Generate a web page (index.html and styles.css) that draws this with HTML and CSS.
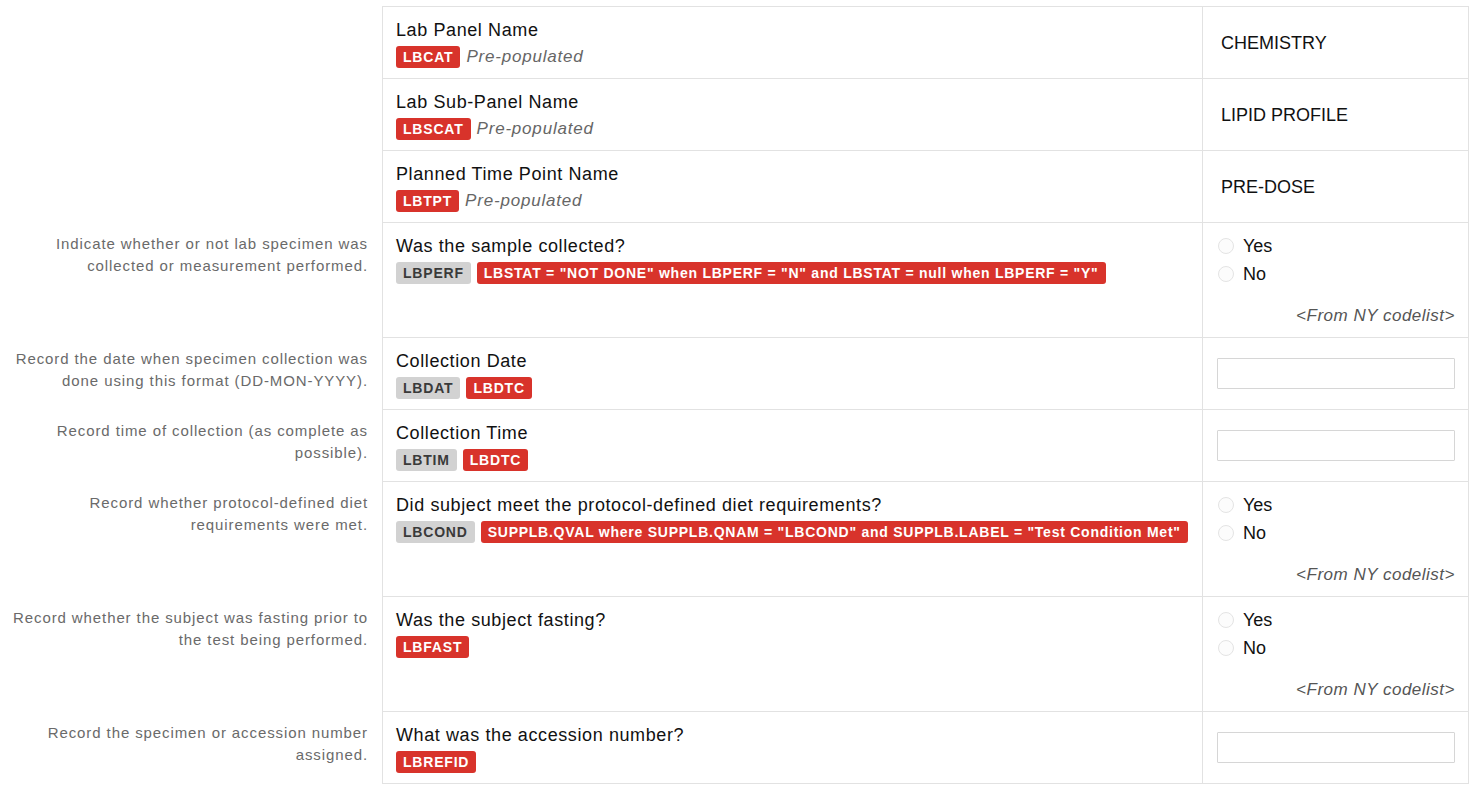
FILE: index.html
```html
<!DOCTYPE html>
<html lang="en">
<head>
  <meta charset="UTF-8">
  <meta name="viewport" content="width=device-width, initial-scale=1.0">
  <title>Laboratory Test Results</title>
  <link rel="stylesheet" href="styles.css">
</head>
<body>
  <div class="form">

    <div class="row">
      <div class="desc"></div>
      <div class="question">
        <div class="label">Lab Panel Name</div>
        <div class="tags"><span class="tag tag-red">LBCAT</span><span class="note">Pre-populated</span></div>
      </div>
      <div class="answer answer-center"><span class="value">CHEMISTRY</span></div>
    </div>

    <div class="row">
      <div class="desc"></div>
      <div class="question">
        <div class="label">Lab Sub-Panel Name</div>
        <div class="tags"><span class="tag tag-red">LBSCAT</span><span class="note">Pre-populated</span></div>
      </div>
      <div class="answer answer-center"><span class="value">LIPID PROFILE</span></div>
    </div>

    <div class="row">
      <div class="desc"></div>
      <div class="question">
        <div class="label">Planned Time Point Name</div>
        <div class="tags"><span class="tag tag-red">LBTPT</span><span class="note">Pre-populated</span></div>
      </div>
      <div class="answer answer-center"><span class="value">PRE-DOSE</span></div>
    </div>

    <div class="row">
      <div class="desc">Indicate whether or not lab specimen was<br>collected or measurement performed.</div>
      <div class="question">
        <div class="label">Was the sample collected?</div>
        <div class="tags"><span class="tag tag-grey">LBPERF</span><span class="tag tag-red tag-map">LBSTAT = "NOT DONE" when LBPERF = "N" and LBSTAT = null when LBPERF = "Y"</span></div>
      </div>
      <div class="answer">
        <label class="radio"><input type="radio" name="lbperf"> Yes</label>
        <label class="radio"><input type="radio" name="lbperf"> No</label>
        <div class="codelist">&lt;From NY codelist&gt;</div>
      </div>
    </div>

    <div class="row">
      <div class="desc">Record the date when specimen collection was<br>done using this format (DD-MON-YYYY).</div>
      <div class="question">
        <div class="label">Collection Date</div>
        <div class="tags"><span class="tag tag-grey">LBDAT</span><span class="tag tag-red">LBDTC</span></div>
      </div>
      <div class="answer answer-center"><input class="text-input" type="text"></div>
    </div>

    <div class="row">
      <div class="desc">Record time of collection (as complete as<br>possible).</div>
      <div class="question">
        <div class="label">Collection Time</div>
        <div class="tags"><span class="tag tag-grey">LBTIM</span><span class="tag tag-red">LBDTC</span></div>
      </div>
      <div class="answer answer-center"><input class="text-input" type="text"></div>
    </div>

    <div class="row">
      <div class="desc">Record whether protocol-defined diet<br>requirements were met.</div>
      <div class="question">
        <div class="label">Did subject meet the protocol-defined diet requirements?</div>
        <div class="tags"><span class="tag tag-grey">LBCOND</span><span class="tag tag-red tag-map">SUPPLB.QVAL where SUPPLB.QNAM = "LBCOND" and SUPPLB.LABEL = "Test Condition Met"</span></div>
      </div>
      <div class="answer">
        <label class="radio"><input type="radio" name="lbcond"> Yes</label>
        <label class="radio"><input type="radio" name="lbcond"> No</label>
        <div class="codelist">&lt;From NY codelist&gt;</div>
      </div>
    </div>

    <div class="row">
      <div class="desc">Record whether the subject was fasting prior to<br>the test being performed.</div>
      <div class="question">
        <div class="label">Was the subject fasting?</div>
        <div class="tags"><span class="tag tag-red">LBFAST</span></div>
      </div>
      <div class="answer">
        <label class="radio"><input type="radio" name="lbfast"> Yes</label>
        <label class="radio"><input type="radio" name="lbfast"> No</label>
        <div class="codelist">&lt;From NY codelist&gt;</div>
      </div>
    </div>

    <div class="row">
      <div class="desc">Record the specimen or accession number<br>assigned.</div>
      <div class="question">
        <div class="label">What was the accession number?</div>
        <div class="tags"><span class="tag tag-red">LBREFID</span></div>
      </div>
      <div class="answer answer-center"><input class="text-input" type="text"></div>
    </div>

  </div>
</body>
</html>
```

FILE: styles.css
```css
body {
  margin: 0;
  background-color: #fff;
  font-family: 'Liberation Sans', Arial, sans-serif;
  color: #111;
}

.form {
  margin-top: 6px;
}

.row {
  display: grid;
  grid-template-columns: 382px 820px 267px;
}

.row:first-child .question,
.row:first-child .answer {
  border-top: 1px solid #e2e2e2;
}

.desc {
  padding: 10px 14px 0 0;
  font-size: 15px;
  line-height: 22px;
  color: #6a6a6a;
  text-align: right;
  letter-spacing: 0.9px;
}

.question {
  padding: 12px 13px 10px 13px;
  border-left: 1px solid #e2e2e2;
  border-bottom: 1px solid #e2e2e2;
}

.label {
  font-size: 18px;
  line-height: 22px;
  letter-spacing: 0.6px;
}

.tags {
  display: flex;
  align-items: center;
  gap: 6px;
  margin-top: 5px;
}

.tag {
  display: inline-block;
  height: 22px;
  line-height: 23px;
  padding: 0 7px;
  border-radius: 3px;
  font-size: 14px;
  font-weight: bold;
  letter-spacing: 0.8px;
}

.tag-red {
  background-color: #d8332b;
  color: #fff;
}

.tag-grey {
  background-color: #d2d2d2;
  color: #3a3a3a;
}

.tag-map {
  letter-spacing: 0.75px;
}

.note {
  font-size: 17px;
  font-style: italic;
  color: #666;
  letter-spacing: 0.8px;
}

.answer {
  padding: 9px 13px 10px 14px;
  border-left: 1px solid #e2e2e2;
  border-right: 1px solid #e2e2e2;
  border-bottom: 1px solid #e2e2e2;
}

.answer-center {
  display: flex;
  align-items: center;
  padding-top: 0;
  padding-bottom: 0;
}

.value {
  padding-left: 4px;
  padding-top: 2px;
  font-size: 18px;
}

.radio {
  display: flex;
  align-items: center;
  height: 28px;
  font-size: 18px;
}

.radio input {
  appearance: none;
  -webkit-appearance: none;
  width: 16px;
  height: 16px;
  margin: 0 9px 0 1px;
  border: 1px solid #e4e4e4;
  border-radius: 50%;
  background-color: #fcfcfc;
}

.codelist {
  margin-top: 17px;
  line-height: 22px;
  font-size: 17px;
  font-style: italic;
  color: #555;
  text-align: right;
  letter-spacing: 0.5px;
}

.text-input {
  width: 100%;
  height: 31px;
  box-sizing: border-box;
  border: 1px solid #d6d6d6;
  border-radius: 1px;
  background-color: #fff;
}
```
